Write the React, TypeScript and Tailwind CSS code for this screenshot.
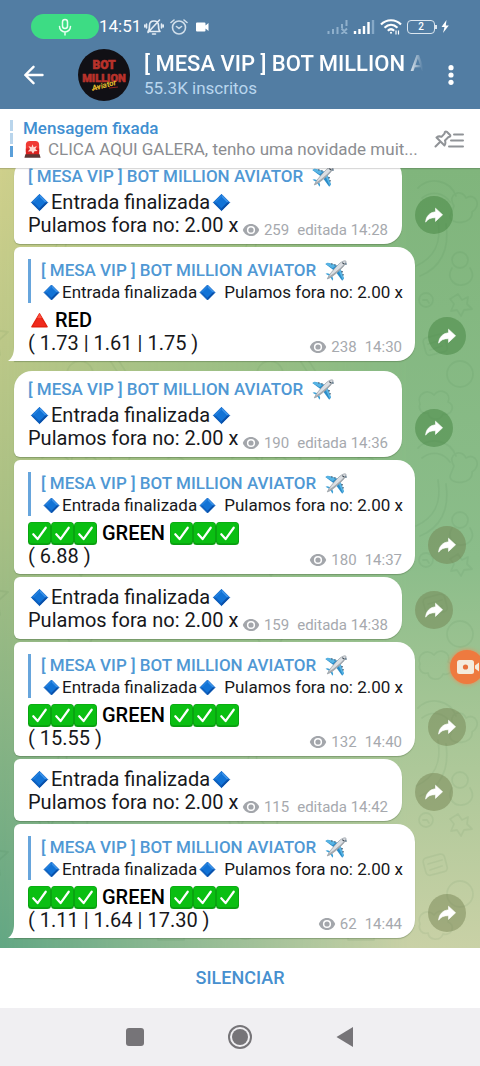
import React from 'react';
import clsx from 'clsx';

type Message = {
  id: number;
  kind: 'entry' | 'result';
  showTitle?: boolean;
  first?: boolean;
  last?: boolean;
  olive?: boolean;
  green?: boolean;
  odds?: string;
  views: string;
  time: string;
};

const CHANNEL = '[ MESA VIP ] BOT MILLION AVIATOR';

const messages: Message[] = [
  { id: 1, kind: 'entry', showTitle: true, first: true, views: '259', time: '14:28' },
  { id: 2, kind: 'result', last: true, odds: '( 1.73 | 1.61 | 1.75 )', views: '238', time: '14:30' },
  { id: 3, kind: 'entry', showTitle: true, first: true, views: '190', time: '14:36' },
  { id: 4, kind: 'result', green: true, olive: true, odds: '( 6.88 )', views: '180', time: '14:37' },
  { id: 5, kind: 'entry', olive: true, views: '159', time: '14:38' },
  { id: 6, kind: 'result', green: true, olive: true, odds: '( 15.55 )', views: '132', time: '14:40' },
  { id: 7, kind: 'entry', olive: true, views: '115', time: '14:42' },
  { id: 8, kind: 'result', green: true, olive: true, last: true, odds: '( 1.11 | 1.64 | 17.30 )', views: '62', time: '14:44' },
];

function Diamond({ className }: { className: string }) {
  return (
    <svg viewBox="0 0 24 24" className={className} aria-hidden="true">
      <path d="M12 3.500 20.500 12 12 20.500 3.500 12Z" fill="#0b5fc0" stroke="#0b5cb8" strokeLinejoin="round" />
      <path d="M12 3.500 20.500 12H12Z" fill="#3b93ea" />
      <path d="M12 3.500V12H3.500Z" fill="#2380de" />
      <path d="M12 20.500 20.500 12H12Z" fill="#0a4fa8" />
      <path d="M12 6 18 12 12 18 6 12Z" fill="#1273d6" />
    </svg>
  );
}

function Check() {
  return (
    <svg viewBox="0 0 24 24" className="size-[23px]" aria-hidden="true">
      <rect x="0" y="0" width="24" height="24" rx="4" fill="#0a9e10" />
      <rect x="0.8" y="0.6" width="22.4" height="21.6" rx="3.4" fill="#0abf12" />
      <path d="M5.500 12.800 10 17.800 18.500 6" fill="none" stroke="#fff" strokeWidth="2.300" strokeLinecap="round" strokeLinejoin="round" />
    </svg>
  );
}

function RedTriangle() {
  return (
    <svg viewBox="0 0 24 24" className="size-[23px]" aria-hidden="true">
      <path d="M12 5 20 18.500H4Z" fill="#f02a1d" stroke="#e2210f" strokeWidth="1.400" strokeLinejoin="round" />
      <path d="M12 5 14.500 9.500H9.500Z" fill="#fb5443" />
    </svg>
  );
}

function Plane() {
  return (
    <svg viewBox="0 0 24 24" className="size-[23px]" aria-hidden="true">
      <path d="M1.5 5.2 4 3.8 16 7.6 10.8 12.2Z" fill="#2b8cc9" />
      <path d="M1.5 5.2 4 3.8 13 6.6 9 9.6Z" fill="#58b4e4" />
      <path d="M12.2 13.2 16.6 8.4 20.8 20.4 19 22.8Z" fill="#2b8cc9" />
      <path d="M14.6 10.8 16.6 8.4 20.8 20.4 19.6 21.6Z" fill="#58b4e4" />
      <path d="M1.6 15.4 3.4 14.8 8 16.2 9.6 20.8 8.8 22.6 6.2 18Z" fill="#3aa0d8" />
      <path d="M3.4 20.8C5 16.5 14.5 5.3 18.2 3.2 20 2 22.2 1.6 22.8 2.2 23.4 2.8 22.4 5 21 6.8 18 10.5 8 19.8 3.4 20.8Z" fill="#dcdfe3" stroke="#8d959c" strokeWidth=".7" />
      <path d="M4.4 19.6C9 17.5 17.5 10 20.8 6.4" fill="none" stroke="#a0a6ac" strokeWidth="1.3" />
      <path d="M19 3.8 21.4 5.4" stroke="#3b4650" strokeWidth="1.2" />
      <path d="M8.2 4.1V6.1M11.4 5.2V7M19.8 13.4 17.9 13.2M20.8 16.6 19 16.4M22.9 4V6.2" stroke="#4d6a80" strokeWidth="1.2" />
    </svg>
  );
}

function Siren() {
  return (
    <svg viewBox="0 0 20 20" className="size-[19px] shrink-0" aria-hidden="true">
      <rect x="3" y="1" width="14" height="15" rx="4" fill="#f03a34" />
      <path d="M3 9h14v7H3z" fill="#d9211f" />
      <path d="M2.5 15h15l1 3.6h-17z" fill="#5d3634" />
      <path d="M10 4.5 11.2 7.6 14.5 6.4 13 9.4 15.4 11.6 12 11.8 10.6 14.4 8.8 11.8 5 12 7.4 9.5 5.8 6.4 8.9 7.5Z" fill="#ffd9d2" />
    </svg>
  );
}

function Eye() {
  return (
    <svg viewBox="0 0 18 14" className="h-3.5 w-[18px]" aria-hidden="true">
      <path d="M9 1C5 1 2 3.600 .8 7 2 10.400 5 13 9 13S16 10.400 17.200 7C16 3.600 13 1 9 1Z" fill="#a3a6ab" />
      <circle cx="9" cy="7" r="4.100" fill="#fff" />
      <circle cx="9" cy="7" r="2.600" fill="#a3a6ab" />
    </svg>
  );
}

function Meta({ message }: { message: Message }) {
  return (
    <div className="flex h-5 shrink-0 items-center text-[15px] text-[#a6a9ae]">
      <Eye />
      <span className="ml-1">{message.views}</span>
      <span className="ml-2">
        {message.kind === 'entry' && 'editada '}
        {message.time}
      </span>
    </div>
  );
}

function ChannelTitle() {
  return (
    <span className="flex items-center gap-2 font-medium whitespace-nowrap text-[#4f98d4]">
      {CHANNEL}
      <Plane />
    </span>
  );
}

function EntryBody({ message }: { message: Message }) {
  return (
    <div className={clsx('px-3.5', message.showTitle ? 'pt-1.5' : 'pt-[9px]')}>
      {message.showTitle && (
        <div className="mb-0.5 h-[25px] text-[17px] leading-[25px]">
          <ChannelTitle />
        </div>
      )}
      <div className="flex items-end justify-between">
        <div className="pb-[7px] text-[20px] leading-[23px] whitespace-nowrap">
          <p className="flex items-center">
            <Diamond className="size-[23px]" />
            Entrada finalizada
            <Diamond className="size-[23px]" />
          </p>
          <p>Pulamos fora no: 2.00 x</p>
        </div>
        <div className="pb-1">
          <Meta message={message} />
        </div>
      </div>
    </div>
  );
}

function ResultBody({ message }: { message: Message }) {
  return (
    <div className="pt-3 pl-3.5">
      <blockquote className="flex h-11 flex-col justify-between border-l-3 border-[#67a5dc] pl-2.5 leading-[21px]">
        <div className="h-[21px] text-[17px]">
          <ChannelTitle />
        </div>
        <p className="flex items-center text-[17px] whitespace-nowrap">
          <Diamond className="size-[21px]" />
          Entrada finalizada
          <Diamond className="mr-1.5 size-[21px]" />
          Pulamos fora no: 2.00 x
        </p>
      </blockquote>
      <div className="flex items-end justify-between pt-1.5 pr-[13px]">
        <div className="pb-1.5 text-[20px] leading-[23px] whitespace-nowrap">
          {message.green ? (
            <p className="flex items-center">
              <Check />
              <Check />
              <Check />
              <strong className="mx-[5px] font-medium text-black">GREEN</strong>
              <Check />
              <Check />
              <Check />
            </p>
          ) : (
            <p className="flex items-center">
              <RedTriangle />
              <strong className="ml-1 font-medium text-black">RED</strong>
            </p>
          )}
          <p>{message.odds}</p>
        </div>
        <div className="pb-1">
          <Meta message={message} />
        </div>
      </div>
    </div>
  );
}

function MessageRow({ message }: { message: Message }) {
  return (
    <li className={clsx('flex shrink-0 items-end gap-[13px]', message.last ? 'mb-2.5' : 'mb-[3px]')}>
      <article
        className={clsx(
          'relative rounded-r-[18px] bg-white text-[#17181b] shadow-[0_1px_1px_rgba(60,90,50,0.35)]',
          message.kind === 'entry' ? 'w-[388px]' : 'w-[401px]',
          message.first ? 'rounded-tl-[18px]' : 'rounded-tl-md',
          !message.last && 'rounded-bl-md',
        )}
      >
        {message.kind === 'entry' ? <EntryBody message={message} /> : <ResultBody message={message} />}
        {message.last && (
          <svg viewBox="0 0 7 14" className="absolute bottom-0 -left-1.5 h-3.5 w-[7px]" aria-hidden="true">
            <path d="M7 0H6C6 6 4.500 11 0 14H7Z" fill="#fff" />
          </svg>
        )}
      </article>
      <button
        type="button"
        aria-label="Encaminhar"
        className={clsx(
          'flex size-[38px] shrink-0 items-center justify-center rounded-full',
          message.last ? 'mb-1.5' : 'mb-2.5',
          message.olive ? 'bg-[#6e7d4c]/45' : 'bg-[#43833f]/50',
        )}
      >
        <svg viewBox="0 0 18 17" className="h-[17px] w-[18px]" aria-hidden="true">
          <path d="M10.500 1.200 17.600 7.800 10.500 14.400V10.700C6 10.600 2.800 11.800 .6 15.200 1 9.800 4.200 5.400 10.500 4.800Z" fill="#fff" stroke="#fff" strokeWidth=".6" strokeLinejoin="round" />
        </svg>
      </button>
    </li>
  );
}

function Wallpaper() {
  return (
    <div className="absolute inset-0 bg-linear-to-b from-[#cfd08c] via-[#a9c084] via-45% to-[#62a784]" aria-hidden="true">
      <div className="absolute inset-0 bg-linear-to-b from-[#80b57c] via-[#8bbd8a] via-50% to-[#c9d1a6] [mask-image:linear-gradient(to_right,transparent,black_85%)]" />
      <svg className="absolute inset-0 size-full opacity-[0.06]">
        <defs>
          <pattern id="doodles" width="190" height="260" patternUnits="userSpaceOnUse" x="98">
            <g fill="none" stroke="#1d5a2c" strokeWidth="1.800" strokeLinecap="round" strokeLinejoin="round">
              <path d="M130 20c12-12 32-8 38 8M134 30c10-8 22-5 28 4" />
              <path d="M166 38c-8-12 8-18 12-8 10-6 16 8 6 14 2 12-22 14-22 4z" />
              <path d="M150 52c4 24-4 38-22 46M158 56c4 26-6 44-26 52" />
              <circle cx="172" cy="92" r="8" />
              <path d="M164 100c-6 10 2 18 10 17s14-8 8-17" />
              <circle cx="138" cy="132" r="7" />
              <path d="M135 132h4l2 3M170 126l4 6 6-3-1 7 5 5-8 1-3 6-4-6-6 1 3-7-4-5z" />
              <rect x="136" y="168" width="22" height="18" rx="4" transform="rotate(-15 146 176)" />
              <path d="M140 176l14-4M142 182l12-4" />
              <circle cx="172" cy="206" r="13" />
              <path d="M132 236c-4-10 8-16 14-9 6-8 18-2 14 7 8 3 4 14-5 12-3 8-14 6-15-1-6 2-10-4-8-9z" />
              <path d="M10 20l12-10 12 10-4 16H14zM5 100c12-14 28-4 24 12M4 180l18 28M10 176l18 28" />
              <path d="M70 30c16-6 26 10 16 22M60 240h26v12H60zM80 150l6 12 14 2-10 9 2 14-12-7-12 7 3-14-10-9 13-2z" />
            </g>
          </pattern>
        </defs>
        <rect width="100%" height="100%" fill="url(#doodles)" />
      </svg>
    </div>
  );
}

function StatusBar() {
  return (
    <div className="flex h-[51px] items-center pt-0.5 pr-[31px] pl-[31px] text-white">
      <div className="flex h-[25px] w-[68px] items-center justify-center rounded-full bg-[#3ddc84]">
        <svg viewBox="0 0 14 18" className="h-[18px] w-3.5" fill="none" stroke="#e9fff2" strokeWidth="1.500" strokeLinecap="round">
          <rect x="4.500" y="1.500" width="5" height="9" rx="2.500" />
          <path d="M1.500 8.500a5.500 5.500 0 0 0 11 0M7 14v3" />
        </svg>
      </div>
      <time className="text-[17px]">14:51</time>
      <svg viewBox="0 0 20 18" className="ml-[3px] h-[18px] w-5" fill="none" stroke="#e3ecf4" strokeWidth="1.600" strokeLinecap="round" strokeLinejoin="round">
        <path d="M5 13.500h11c-1.500-1.500-1.500-3-1.500-6C14.500 4.500 12.500 3 10 3S5.500 4.500 5.500 7.500c0 3 0 4.500-1.500 6M8.500 16h3M2.500 6v4M.8 7v2M17.500 6v4M19.200 7v2M15.500 2 4 14.500" />
      </svg>
      <svg viewBox="0 0 18 18" className="ml-1.5 size-[18px]" fill="none" stroke="#d0deea" strokeWidth="1.600" strokeLinecap="round" strokeLinejoin="round">
        <circle cx="9" cy="9.500" r="6.500" />
        <path d="M6.500 8.500 9 10.500 11.500 8.500M1 4.500 4 2M17 4.500 14 2" />
      </svg>
      <svg viewBox="0 0 13 10" className="ml-2 h-2.5 w-[13px]" fill="#fff">
        <path d="M1 .5h7.500q1 0 1 1v2L12.500 1v8l-3-2.500v2q0 1-1 1H1q-1 0-1-1v-7q0-1 1-1z" />
      </svg>
      <div className="ml-auto flex items-center">
        <svg viewBox="0 0 22 14" className="h-3.5 w-[22px]" stroke="#8fb0cc" strokeWidth="2" fill="none">
          <path d="M1.500 14v-3M6 14v-5M10.500 14V7M15 8V4M19.500 6V0M14.500 8.500 20 14M20 8.500 14.500 14" />
        </svg>
        <svg viewBox="0 0 22 14" className="ml-1 h-3.5 w-[22px]" strokeWidth="2.400" fill="none">
          <path d="M2 14v-3M6.500 14V9M11 14V6M15.500 14V2" stroke="#fff" />
          <path d="M20 14V0" stroke="#86a9c7" />
        </svg>
        <svg viewBox="0 0 22 17" className="ml-[5px] h-[17px] w-[22px]" fill="none" stroke="#fff" strokeWidth="2.200">
          <path d="M1 6.500C6.500.8 15.500.8 21 6.500M4.500 9.700C8.500 6 13.500 6 17.500 9.700M7.800 12.700c2-1.800 4.400-1.800 6.400 0" />
          <circle cx="11" cy="14.800" r="1" fill="#fff" stroke="none" />
          <path d="M16 12.500v4M18.500 12.500v4" strokeWidth="1.200" />
        </svg>
        <div className="ml-[5px] flex h-3.5 w-7 items-center justify-center rounded border border-[#dbe6ef] text-[10px] leading-none font-medium">
          2
        </div>
        <span className="h-1 w-0.5 bg-[#dbe6ef]" />
        <svg viewBox="0 0 8 13" className="ml-1 h-[13px] w-2" fill="#fff">
          <path d="M5.500 0 .5 7H3.500L2 13 7.800 5.500H4.800Z" />
        </svg>
      </div>
    </div>
  );
}

function Avatar() {
  return (
    <svg viewBox="0 0 52 52" className="ml-[34px] size-[52px] shrink-0" role="img" aria-label="BOT MILLION">
      <circle cx="26" cy="26" r="26" fill="#111015" />
      <g fontFamily="Roboto, sans-serif" fontWeight="900" textAnchor="middle" fill="#b8322b" stroke="#b8322b" strokeWidth=".6">
        <text x="26" y="20" fontSize="12">BOT</text>
        <text x="26" y="33" fontSize="11">MILLION</text>
      </g>
      <text x="26" y="39" fontSize="8" fontStyle="italic" fontWeight="700" fontFamily="Roboto, sans-serif" textAnchor="middle" fill="#e0bd2d" transform="rotate(-15 26 36)">
        Aviator
      </text>
      <path d="M14 41 22 37" stroke="#d7a426" strokeWidth="1.200" />
      <path d="M31 39l9-1" stroke="#8e2222" strokeWidth="1.200" />
    </svg>
  );
}

export default function App() {
  return (
    <div className="flex h-screen flex-col overflow-hidden bg-white font-[Roboto,'Noto_Sans',sans-serif]">
      <header className="h-[109px] shrink-0 bg-[#527da3]">
        <StatusBar />
        <div className="-mt-0.5 flex h-[52px] items-center pr-[26px] pl-6">
          <button type="button" aria-label="Voltar">
            <svg viewBox="0 0 20 20" className="size-5" fill="none" stroke="#fff" strokeWidth="2.400" strokeLinecap="round" strokeLinejoin="round">
              <path d="M18.500 10H1.500M9.500 1.800 1.300 10l8.200 8.200" />
            </svg>
          </button>
          <Avatar />
          <div className="ml-3.5 min-w-0 flex-1">
            <h1 className="overflow-hidden text-[22px] leading-[27px] font-medium whitespace-nowrap text-white [mask-image:linear-gradient(to_right,black_calc(100%-16px),transparent_calc(100%-1px))]">
              {CHANNEL}
            </h1>
            <p className="text-[17px] leading-[23px] text-[#b9d6ee]">55.3K inscritos</p>
          </div>
          <button type="button" aria-label="Mais opções" className="ml-6">
            <svg viewBox="0 0 6 20" className="h-5 w-1.5" fill="#fff">
              <circle cx="3" cy="2.700" r="2.600" />
              <circle cx="3" cy="10" r="2.600" />
              <circle cx="3" cy="17.300" r="2.600" />
            </svg>
          </button>
        </div>
      </header>

      <section className="z-10 flex h-[59px] shrink-0 items-center bg-white pr-4 pl-2.5 shadow-[0_1px_1px_rgba(0,0,0,0.15)]">
        <div className="flex h-[38px] w-[3px] flex-col gap-0.5" aria-hidden="true">
          <span className="flex-1 bg-[#b9d5ec]" />
          <span className="flex-1 bg-[#b9d5ec]" />
          <span className="flex-1 bg-[#5a9fd9]" />
        </div>
        <div className="ml-2.5 min-w-0 flex-1">
          <h2 className="text-[17px] leading-[22px] font-medium text-[#3f8fd1]">Mensagem fixada</h2>
          <p className="flex items-center gap-1.5 text-[17px] leading-[21px] text-[#8b8d91]">
            <Siren />
            <span className="whitespace-nowrap">CLICA AQUI GALERA, tenho uma novidade muit...</span>
          </p>
        </div>
        <button type="button" aria-label="Mensagens fixadas" className="mb-5 ml-2 shrink-0 self-end">
          <svg viewBox="0 0 30 18" className="h-[18px] w-[30px]" fill="none" stroke="#909397" strokeWidth="2" strokeLinecap="round" strokeLinejoin="round">
            <path d="M1.500 16.500 6 12M2.500 7.500 10.500 15.500C12 13.500 11.500 12 11 10.500L14.500 7C16 7 17 6 15.800 4.800L12.800 1.800C11.500.8 10.500 2 10.700 3.300L7.500 6.800C5.500 6 4 6.300 2.500 7.500Z" />
            <path d="M20 4.500h9M17 10.500h12M15 16.500h14" />
          </svg>
        </button>
      </section>

      <main className="relative min-h-0 flex-1 overflow-hidden">
        <Wallpaper />
        <ul className="relative flex h-full flex-col justify-end pl-3.5">
          {messages.map((message) => (
            <MessageRow key={message.id} message={message} />
          ))}
        </ul>
        <button
          type="button"
          aria-label="Gravador de tela"
          className="absolute -right-1 bottom-[264px] flex size-[34px] items-center justify-center rounded-full bg-[#ee7a3f] shadow-[0_0_4px_#ee8a55]"
        >
          <svg viewBox="0 0 24 16" className="ml-1 h-4 w-6">
            <rect x="0" y="1" width="17" height="14" rx="2.500" fill="#f4ebdd" />
            <path d="M18 6.500 22 3.500V12.500L18 9.500Z" fill="#f4ebdd" />
            <circle cx="8.500" cy="8" r="2.600" fill="#e8703a" />
          </svg>
        </button>
      </main>

      <footer className="shrink-0">
        <button type="button" className="flex h-[60px] w-full items-center justify-center bg-white pb-0.5 text-[18px] font-medium text-[#4790cf]">
          SILENCIAR
        </button>
        <nav className="flex h-[58px] items-center justify-center gap-[84px] bg-[#f0eff2]">
          <button type="button" aria-label="Recentes">
            <span className="block size-[18px] rounded-[3px] bg-[#767478]" />
          </button>
          <button type="button" aria-label="Início">
            <span className="flex size-6 items-center justify-center rounded-full border-2 border-[#767478]">
              <span className="size-4 rounded-full bg-[#767478]" />
            </span>
          </button>
          <button type="button" aria-label="Voltar">
            <svg viewBox="0 0 18 20" className="h-5 w-[18px]" fill="#767478">
              <path d="M17 0V20L.5 10Z" />
            </svg>
          </button>
        </nav>
      </footer>
    </div>
  );
}
